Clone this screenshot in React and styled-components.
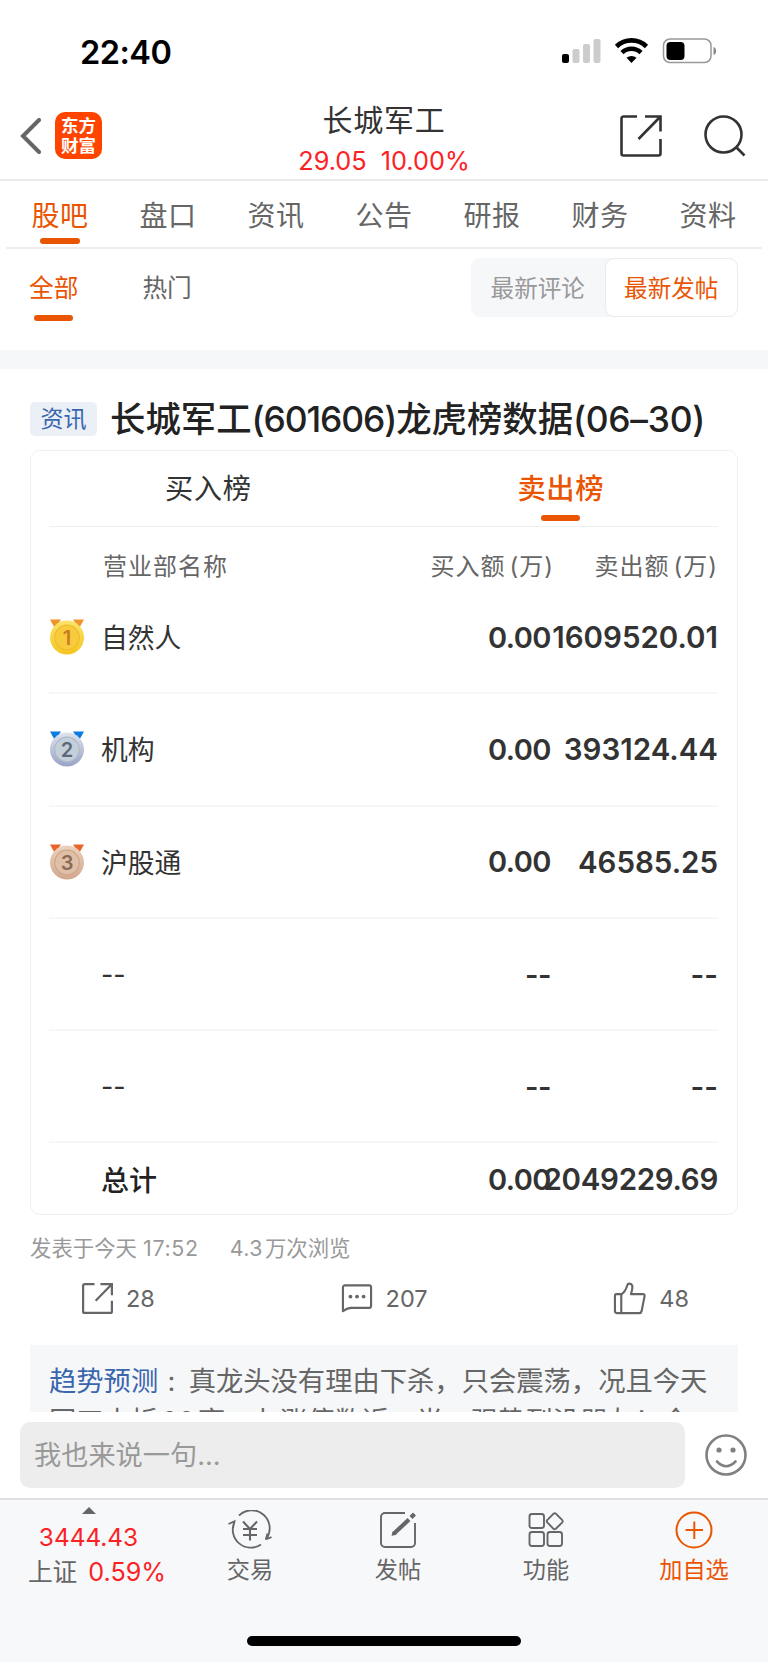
import React from 'react'
import styled, { createGlobalStyle } from 'styled-components'

const tabs = ['股吧', '盘口', '资讯', '公告', '研报', '财务', '资料']

const rows = [
    { name: '自然人', buy: '0.00', sell: '1609520.01', medal: 1 },
    { name: '机构', buy: '0.00', sell: '393124.44', medal: 2 },
    { name: '沪股通', buy: '0.00', sell: '46585.25', medal: 3 },
    { name: '--', buy: '--', sell: '--' },
    { name: '--', buy: '--', sell: '--' },
]

const medals = {
    1: { ribbon: '#f0932b', top: '#fbe36a', bottom: '#f5c51d', inner: '#f7cb3c', ring: '#eebb2e', text: '#c97a22' },
    2: { ribbon: '#0a7be0', top: '#dfe3ee', bottom: '#98a3c4', inner: '#c3d0da', ring: '#aeb9cb', text: '#5f6878' },
    3: { ribbon: '#e8652b', top: '#ecd2bf', bottom: '#d2a78d', inner: '#dfbfa6', ring: '#cda58a', text: '#8b6a58' },
}

function Medal({ rank }) {
    const m = medals[rank]
    return (
        <svg width="36" height="38" viewBox="0 0 36 38">
            <defs>
                <linearGradient id={`medal${rank}`} x1="0" y1="0" x2="0" y2="1">
                    <stop offset="0" stopColor={m.top} />
                    <stop offset="1" stopColor={m.bottom} />
                </linearGradient>
            </defs>
            <path d="M1 1.500h11l-6 9zM35 1.500H24l6 9z" fill={m.ribbon} />
            <circle cx="18" cy="19.500" r="17" fill={`url(#medal${rank})`} />
            <circle cx="18" cy="19.500" r="12.300" fill={m.inner} stroke={m.ring} strokeWidth="1.200" />
            <MedalNo x="18" y="26.500" textAnchor="middle" fill={m.text}>{rank}</MedalNo>
        </svg>
    )
}

function ShareIcon({ size, stroke }) {
    return (
        <svg width={size} height={size} viewBox="0 0 42 42" fill="none" stroke="currentColor" strokeWidth={stroke} strokeLinejoin="round">
            <path d="M17 1.500H3.500a2 2 0 0 0-2 2v35a2 2 0 0 0 2 2h35a2 2 0 0 0 2-2V24" />
            <path d="M25 1.500h15.500V16.500M40 2L18.500 24" strokeLinejoin="miter" />
        </svg>
    )
}

export default function App() {
    return (
        <Page>
            <GlobalStyle />
            <StatusBar>
                <Clock>22:40</Clock>
                <svg width="158" height="28" viewBox="0 0 158 28">
                    <rect x="1" y="16" width="7" height="9" rx="2" />
                    <g fill="#ccc">
                        <rect x="11.500" y="11" width="7" height="14" rx="2" />
                        <rect x="22" y="6" width="7" height="19" rx="2" />
                        <rect x="32.500" y="1" width="7" height="24" rx="2" />
                    </g>
                    <g fill="none" stroke="#000" strokeWidth="4.600">
                        <path d="M55.500 8.500a21.500 21.500 0 0 1 30 0" />
                        <path d="M61 14.600a13.600 13.600 0 0 1 19 0" />
                    </g>
                    <path d="M70.500 25l-5-5.200a7.500 7.500 0 0 1 10 0z" />
                    <rect x="102.500" y="1" width="47.500" height="23.500" rx="6.500" fill="none" stroke="#999" strokeWidth="1.500" />
                    <rect x="105.500" y="4" width="18" height="18" rx="4" />
                    <path d="M152.500 9c3.500 1 3.500 7 0 8z" fill="#888" />
                </svg>
            </StatusBar>
            <Header>
                <Left>
                    <svg width="22" height="36" viewBox="0 0 22 36" fill="none" stroke="#666" strokeWidth="4">
                        <path d="M19 2L3 18l16 16" strokeLinecap="round" />
                    </svg>
                    <Logo>东方<br />财富</Logo>
                </Left>
                <Stock>
                    <StockName>长城军工</StockName>
                    <Quote><span>29.05</span><span>10.00%</span></Quote>
                </Stock>
                <Right>
                    <ShareIcon size={42} stroke={2.6} />
                    <svg width="42" height="42" viewBox="0 0 42 42" fill="none" stroke="#333" strokeWidth="2.600">
                        <circle cx="19.500" cy="19.500" r="18" />
                        <path d="M32 32l8.500 8.500" />
                    </svg>
                </Right>
            </Header>
            <Tabs>
                {tabs.map((t, i) => <Tab key={t} $active={i === 0}>{t}</Tab>)}
            </Tabs>
            <SubBar>
                <SubTab $active>全部</SubTab>
                <SubTab>热门</SubTab>
                <Switch>
                    <Option>最新评论</Option>
                    <Option $active>最新发帖</Option>
                </Switch>
            </SubBar>
            <Article>
                <TitleRow>
                    <Tag>资讯</Tag>
                    <Title>长城军工<Code $spacing={-1.100}>(601606)</Code>龙虎榜数据<Code $spacing={-0.300}>(06–30)</Code></Title>
                </TitleRow>
                <Card>
                    <CardTabs>
                        <CardTab>买入榜</CardTab>
                        <CardTab $active>卖出榜</CardTab>
                    </CardTabs>
                    <Table>
                        <HeadRow>
                            <HeadName>营业部名称</HeadName>
                            <HeadCell>买入额<i>(</i>万)</HeadCell>
                            <HeadCell>卖出额<i>(</i>万)</HeadCell>
                        </HeadRow>
                        {rows.map((r, i) => (
                            <Row key={i}>
                                <Rank>{r.medal && <Medal rank={r.medal} />}</Rank>
                                <Name>{r.name}</Name>
                                <Buy>{r.buy}</Buy>
                                <Sell>{r.sell}</Sell>
                            </Row>
                        ))}
                        <TotalRow>
                            <Rank />
                            <TotalName>总计</TotalName>
                            <Buy>0.00</Buy>
                            <TotalSell>2049229.69</TotalSell>
                        </TotalRow>
                    </Table>
                </Card>
                <Meta>
                    <span>发表于今天 <b>17:52</b></span>
                    <span><Views>4.3</Views>万次浏览</span>
                </Meta>
                <Actions>
                    <Action>
                        <ShareIcon size={31} stroke={3} />
                        28
                    </Action>
                    <Action>
                        <svg width="32" height="30" viewBox="0 0 34 32" fill="none" stroke="#666" strokeWidth="2.300" strokeLinejoin="round">
                            <path d="M4 2.500h26a2 2 0 0 1 2 2v20a2 2 0 0 1-2 2H11q-4 0-9 3.500v-25.500a2 2 0 0 1 2-2z" />
                            <g fill="#666" stroke="none">
                                <circle cx="10" cy="14.500" r="2" />
                                <circle cx="17" cy="14.500" r="2" />
                                <circle cx="24" cy="14.500" r="2" />
                            </g>
                        </svg>
                        207
                    </Action>
                    <Action>
                        <svg width="33" height="33" viewBox="0 0 34 34" fill="none" stroke="#666" strokeWidth="2.200" strokeLinejoin="round">
                            <path d="M3.500 12.500H9q4-3 5.800-9.500c.8-2.200 5.200-1.800 5.200 2 0 3-.6 5-1.500 7.500h12.300c1.300 0 2 .8 1.700 2.200l-3 15.300q-.5 2-2.300 2H4q-2 0-2-2V14.500q0-2 1.500-2z" />
                            <path d="M8.500 12.500V32" />
                        </svg>
                        48
                    </Action>
                </Actions>
                <Replies>
                    <p>
                        <User>趋势预测</User><Colon>:</Colon>真龙头没有理由下杀，只会震荡，况且今天<br />
                        国工大拆<Digits>88</Digits>亮，七涨停数近一半，强势到没朋友！今
                    </p>
                </Replies>
            </Article>
            <InputBar>
                <Input>我也来说一句...</Input>
                <svg width="42" height="42" viewBox="0 0 42 42" fill="none" stroke="#808080" strokeWidth="2.600" strokeLinecap="round">
                    <circle cx="21" cy="21" r="19.500" />
                    <path d="M12 27.500q9 9.500 18.500 0" />
                    <g fill="#808080" stroke="none">
                        <circle cx="14" cy="16" r="2.600" />
                        <circle cx="28" cy="16" r="2.600" />
                    </g>
                </svg>
            </InputBar>
            <BottomNav>
                <Index>
                    <Caret />
                    <IndexValue>3444.43</IndexValue>
                    <IndexLine><span>上证</span><b>0.59%</b></IndexLine>
                </Index>
                <NavItem>
                    <svg width="44" height="40" viewBox="0 0 44 40" fill="none" stroke="#666" strokeWidth="1.800">
                        <path d="M11 5.500A18 18 0 0 1 38.500 28.500M37.800 29.500l1.700-6M37.500 29.500l6-2.300" />
                        <path d="M33 34.500A18 18 0 0 1 6.500 12M.5 14l6-2.700L5 18" />
                        <path d="M15 11.500l7 7.500 7-7.500M15 19h14M15 25h14M22 19v11.500" strokeWidth="2.100" />
                    </svg>
                    交易
                </NavItem>
                <NavItem>
                    <svg width="40" height="40" viewBox="0 0 40 40" fill="none" stroke="#666" strokeWidth="1.900">
                        <path d="M27 3H7a4 4 0 0 0-4 4v26a4 4 0 0 0 4 4h26a4 4 0 0 0 4-4V13" />
                        <path d="M13.500 26l1.200-4.500 4 2.800z" fill="#666" stroke="none" />
                        <path d="M15.500 24L31 9.500M33 7.500l3.500-3.500" strokeWidth="4.200" />
                    </svg>
                    发帖
                </NavItem>
                <NavItem>
                    <svg width="40" height="40" viewBox="0 0 40 40" fill="none" stroke="#666" strokeWidth="1.900" strokeLinejoin="round">
                        <rect x="3.500" y="4" width="14.500" height="14" rx="2.500" />
                        <rect x="3.500" y="22" width="14.500" height="14" rx="2.500" />
                        <rect x="21.500" y="22" width="14.500" height="14" rx="2.500" />
                        <path d="M27.600 3.600q1.200-.8 2.200 0l6.500 6.600q.9 1.200 0 2.200l-6.500 6.400q-1.200.9-2.300 0l-6.300-6.400q-.9-1.200 0-2.200z" />
                    </svg>
                    功能
                </NavItem>
                <NavItem $active>
                    <svg width="40" height="40" viewBox="0 0 40 40" fill="none" stroke="#ea5504" strokeWidth="2">
                        <circle cx="20" cy="20" r="17.500" />
                        <path d="M11.500 20h17.500M20.300 11.500v17.500" />
                    </svg>
                    加自选
                </NavItem>
                <HomeBar />
            </BottomNav>
        </Page>
    )
}

const GlobalStyle = createGlobalStyle`
body{
    margin: 0;
    background: #fff;
}
*{
    box-sizing: border-box;
}
svg{
    display: block;
    flex-shrink: 0;
}
i, b{
    font-style: normal;
    font-weight: inherit;
}
`
const Page = styled.div`
width: 768px;
height: 1663px;
overflow: hidden;
display: flex;
flex-direction: column;
font-family: Inter, "Noto Sans CJK SC", sans-serif;
color: #333;
white-space: nowrap;
`
const StatusBar = styled.div`
height: 102px;
flex-shrink: 0;
display: flex;
justify-content: space-between;
align-items: center;
padding: 2px 49px 0 80px;
`
const Clock = styled.div`
font-size: 32.500px;
font-weight: 600;
letter-spacing: -0.500px;
color: #000;
`
const Header = styled.header`
height: 79px;
flex-shrink: 0;
display: grid;
grid-template-columns: 1fr auto 1fr;
border-bottom: 2px solid #ebebeb;
`
const Left = styled.div`
display: flex;
align-items: center;
gap: 13px;
padding: 0 0 10px 20px;
height: 77px;
`
const Logo = styled.div`
width: 47px;
height: 47px;
border-radius: 10px;
background: #ff4400;
color: #fff;
text-align: center;
padding-top: 3px;
font-family: "Noto Sans CJK SC", sans-serif;
font-size: 17.500px;
font-weight: 700;
line-height: 20px;
`
const Stock = styled.div`
display: flex;
flex-direction: column;
align-items: center;
`
const StockName = styled.div`
font-size: 30px;
letter-spacing: 0.700px;
line-height: 36px;
`
const Quote = styled.div`
display: flex;
gap: 14px;
font-size: 25.300px;
line-height: 45px;
color: #fb2226;
`
const Right = styled.div`
display: flex;
justify-content: flex-end;
gap: 42px;
padding: 13px 22px 0 0;
`
const Tabs = styled.nav`
display: flex;
height: 68px;
flex-shrink: 0;
margin: 0 6px;
border-bottom: 2px solid #ededed;
`
const Tab = styled.div`
flex: 1;
display: flex;
flex-direction: column;
align-items: center;
font-size: 28px;
letter-spacing: 0.500px;
line-height: 44px;
padding-top: 13px;
color: ${p => p.$active ? '#ea5504' : '#666'};
&::after{
    content: "";
    width: 40px;
    height: 6px;
    border-radius: 3px;
    background: ${p => p.$active ? '#ea5504' : 'transparent'};
}
`
const SubBar = styled.div`
height: 120px;
flex-shrink: 0;
display: flex;
align-items: flex-start;
padding: 9px 30px 0 29px;
border-bottom: 19px solid #f6f7f9;
`
const SubTab = styled.div`
display: flex;
flex-direction: column;
align-items: center;
margin-right: 64px;
padding-top: 4px;
font-size: 24.700px;
line-height: 53px;
color: ${p => p.$active ? '#ea5504' : '#666'};
&::after{
    content: "";
    width: 39px;
    height: 6px;
    border-radius: 3px;
    background: ${p => p.$active ? '#ea5504' : 'transparent'};
}
`
const Switch = styled.div`
display: flex;
width: 267px;
height: 59px;
margin-left: auto;
border-radius: 9px;
background: #f6f7f9;
`
const Option = styled.div`
flex: 1;
text-align: center;
font-size: 23.600px;
line-height: 59px;
border-radius: 9px;
border: 1px solid ${p => p.$active ? '#ebebeb' : 'transparent'};
background: ${p => p.$active ? '#fff' : 'transparent'};
color: ${p => p.$active ? '#ea5504' : '#999'};
`
const Article = styled.article`
height: 1043px;
flex-shrink: 0;
overflow: hidden;
padding: 28px 30px 0;
`
const TitleRow = styled.div`
display: flex;
align-items: center;
gap: 13px;
height: 44px;
`
const Tag = styled.div`
width: 67px;
height: 34px;
border-radius: 5px;
background: #ebf0f7;
color: #3a66ad;
font-size: 23px;
line-height: 35px;
text-align: center;
`
const Title = styled.h1`
margin: 0;
font-size: 35.400px;
font-weight: 500;
line-height: 44px;
padding-top: 2px;
color: #222;
`
const Code = styled.span`
letter-spacing: ${p => p.$spacing}px;
`
const Card = styled.section`
height: 765px;
margin-top: 9px;
border: 1px solid #f0f0f0;
border-radius: 10px;
`
const CardTabs = styled.div`
display: flex;
height: 75px;
padding-left: 1px;
`
const CardTab = styled.div`
flex: 1;
display: flex;
flex-direction: column;
align-items: center;
font-size: 28.300px;
letter-spacing: 0.500px;
line-height: 51px;
padding-top: 13px;
font-weight: ${p => p.$active ? 500 : 400};
color: ${p => p.$active ? '#ea5504' : '#333'};
&::after{
    content: "";
    width: 39px;
    height: 6px;
    border-radius: 3px;
    background: ${p => p.$active ? '#ea5504' : 'transparent'};
}
`
const Table = styled.div`
margin: 0 19px 0 18px;
border-top: 1px solid #f0f0f0;
`
const HeadRow = styled.div`
display: flex;
align-items: center;
height: 55px;
padding-top: 20px;
font-size: 24px;
letter-spacing: 1px;
color: #666;
`
const HeadName = styled.div`
margin-left: 54px;
flex: 1;
`
const HeadCell = styled.div`
width: 164px;
text-align: right;
i{
    margin-left: 4px;
}
`
const Row = styled.div`
display: flex;
align-items: center;
height: 112.300px;
border-bottom: 2px solid #f7f7f7;
`
const TotalRow = styled(Row)`
height: 72px;
border: none;
`
const Rank = styled.div`
width: 52px;
`
const Name = styled.div`
flex: 1;
font-size: 26.800px;
padding-bottom: 1px;
`
const TotalName = styled(Name)`
font-size: 28px;
font-weight: 500;
color: #222;
`
const Buy = styled.div`
width: 100px;
text-align: right;
font-size: 29px;
font-weight: 600;
letter-spacing: -0.500px;
`
const Sell = styled(Buy)`
width: 167px;
display: flex;
justify-content: flex-end;
font-size: 29.500px;
letter-spacing: 0;
`
const TotalSell = styled(Sell)`
letter-spacing: -0.300px;
`
const Meta = styled.div`
display: flex;
gap: 31px;
margin-top: 16px;
font-size: 21.400px;
line-height: 34px;
color: #999;
b{
    letter-spacing: 0.700px;
}
`
const Views = styled.span`
letter-spacing: 0.400px;
margin-right: 2px;
`
const Actions = styled.div`
display: flex;
justify-content: space-between;
align-items: center;
height: 62px;
margin-top: 2px;
padding: 0 49px 0 52px;
`
const Action = styled.div`
display: flex;
align-items: center;
gap: 13px;
font-size: 23.500px;
color: #666;
`
const Replies = styled.div`
margin-top: 16px;
padding: 17px 19px;
height: 80px;
background: #f6f7f9;
p{
    margin: 0;
    font-size: 27.300px;
    line-height: 40px;
    color: #666;
}
`
const User = styled.span`
color: #3a66ad;
`
const Colon = styled.span`
display: inline-block;
width: 30.500px;
padding-right: 4px;
text-align: center;
`
const Digits = styled.span`
padding: 0 3px;
`
const InputBar = styled.div`
height: 86px;
flex-shrink: 0;
display: flex;
align-items: center;
justify-content: space-between;
padding: 0 21px 0 20px;
`
const Input = styled.div`
width: 665px;
height: 66px;
border-radius: 10px;
background: #ededed;
padding-left: 14px;
font-size: 27.200px;
line-height: 68px;
color: #999;
`
const BottomNav = styled.footer`
position: relative;
height: 164px;
flex-shrink: 0;
display: flex;
border-top: 2px solid #dfdfe3;
background: #f7f8fa;
`
const Index = styled.div`
width: 177px;
margin-right: -1px;
padding-top: 7px;
display: flex;
flex-direction: column;
align-items: center;
`
const Caret = styled.div`
border: 7px solid transparent;
border-top: none;
border-bottom-color: #666;
`
const IndexValue = styled.div`
font-size: 24.400px;
line-height: 47px;
color: #fb2226;
`
const IndexLine = styled.div`
display: flex;
gap: 11px;
font-size: 24.700px;
line-height: 22px;
padding-left: 17px;
color: #666;
b{
    font-size: 25.200px;
    color: #fb2226;
}
`
const NavItem = styled.div`
width: 148px;
display: flex;
flex-direction: column;
align-items: center;
padding-top: 10px;
font-size: 23.200px;
line-height: 41px;
color: ${p => p.$active ? '#ea5504' : '#666'};
`
const HomeBar = styled.div`
position: absolute;
left: 247px;
bottom: 16px;
width: 274px;
height: 10px;
border-radius: 5px;
background: #000;
`
const MedalNo = styled.text`
font-size: 20px;
font-weight: 600;
`
